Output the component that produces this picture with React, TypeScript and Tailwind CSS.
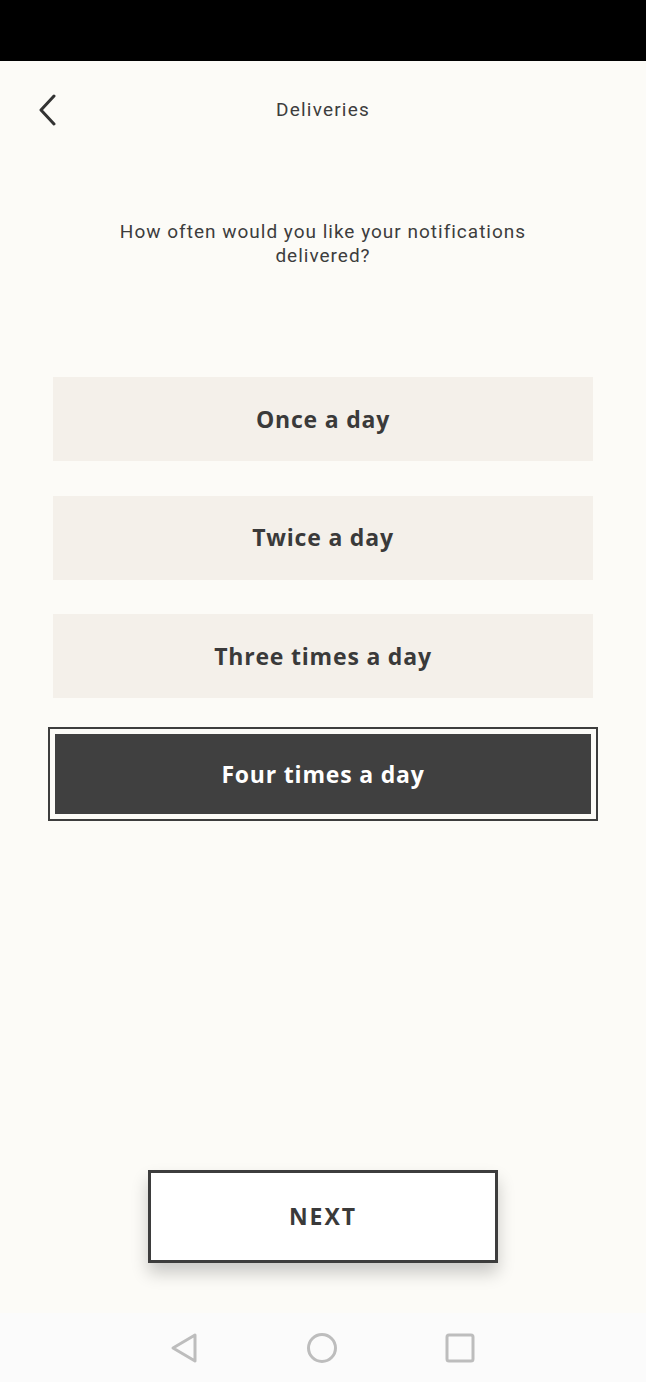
const options = ["Once a day", "Twice a day", "Three times a day"];

const BackIcon = () => (
  <svg width="20" height="32" viewBox="0 0 20 32" fill="none">
    <path d="M16 2L3 16l13 14" stroke="#333333" strokeWidth="3" strokeLinecap="round" strokeLinejoin="round" />
  </svg>
);

const NavBar = () => (
  <div className="h-[69px] bg-[#fbfbfb] flex items-center justify-between pl-[170px] pr-[171px]">
    <svg width="29" height="32" viewBox="0 0 29 32" fill="none">
      <path d="M25 3L3 16l22 13z" stroke="#bdbdbd" strokeWidth="3" strokeLinejoin="round" />
    </svg>
    <svg width="32" height="32" viewBox="0 0 32 32" fill="none">
      <circle cx="16" cy="16" r="13.5" stroke="#bdbdbd" strokeWidth="3" />
    </svg>
    <svg width="30" height="30" viewBox="0 0 30 30" fill="none">
      <rect x="2" y="2" width="26" height="26" rx="2" stroke="#bdbdbd" strokeWidth="3" />
    </svg>
  </div>
);

export default function App() {
  return (
    <div className="h-[1382px] flex flex-col bg-[#fcfbf7] font-['Roboto',sans-serif] text-[#3a3a3a]">
      <div className="h-[61px] bg-black" />

      <header className="relative h-[98px] flex items-center justify-center">
        <button className="absolute left-[38px] top-[33px]">
          <BackIcon />
        </button>
        <h1 className="text-[19px] tracking-[1.2px] text-[#3d3d3d]">Deliveries</h1>
      </header>

      <main className="flex-1 flex flex-col items-center">
        <p className="mt-[61px] text-center text-[19px] leading-[24px] tracking-[1px] text-[#3d3d3d] w-[470px]">
          How often would you like your notifications delivered?
        </p>

        <div className="mt-[109px] flex flex-col items-center">
          {options.map((o, i) => (
            <button
              key={o}
              className={`w-[540px] h-[84px] bg-[#f4f0ea] flex items-center justify-center font-['Open_Sans',sans-serif] font-bold text-[23px] tracking-[0.8px] text-[#3a3a3a] ${
                i === 0 ? "" : "mt-[34.5px]"
              }`}
            >
              {o}
            </button>
          ))}
          <div className="mt-[29px] w-[550px] h-[94px] border-2 border-[#3d3d3d] p-[5px]">
            <button className="w-full h-full bg-[#404040] flex items-center justify-center font-['Open_Sans',sans-serif] font-bold text-[23px] tracking-[0.8px] text-white">
              Four times a day
            </button>
          </div>
        </div>
      </main>

      <div className="flex justify-center pb-[50px]">
        <button className="w-[350px] h-[93px] bg-white border-[3px] border-[#3d3d3d] shadow-[0_10px_16px_rgba(0,0,0,0.2)] font-['Open_Sans',sans-serif] font-bold text-[23px] tracking-[2px] text-[#3a3a3a]">
          NEXT
        </button>
      </div>

      <NavBar />
    </div>
  );
}
